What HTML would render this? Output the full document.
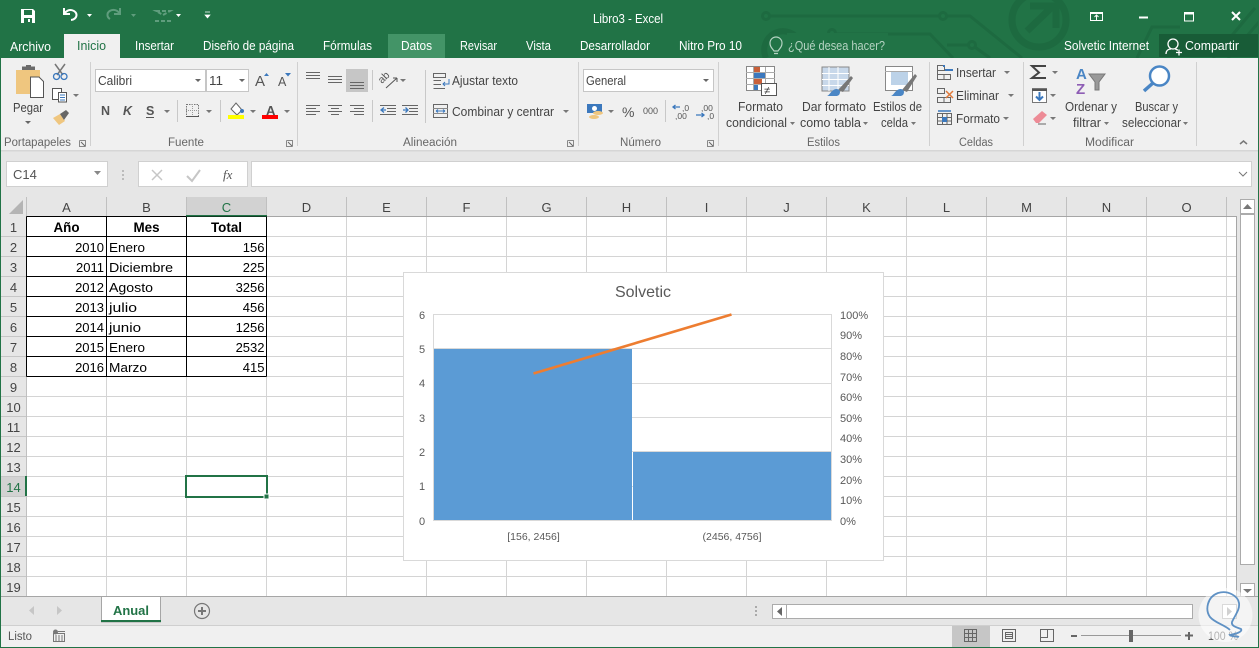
<!DOCTYPE html>
<html><head><meta charset="utf-8"><title>Libro3 - Excel</title>
<style>
html,body{margin:0;padding:0;background:#e6e6e6;width:1259px;height:648px;overflow:hidden}
svg{display:block}
text{font-family:"Liberation Sans",sans-serif;}
.tab{font-size:12.5px;fill:#fff}
.rb{font-size:12.5px;fill:#444}
.gl{font-size:11.5px;fill:#666}
.c{font-size:13px;fill:#000}
.b{font-size:13.4px;fill:#000;font-weight:bold}
.h{font-size:13px;fill:#444}
.ax{font-size:11px;fill:#595959}
</style></head><body>
<svg width="1259" height="648" viewBox="0 0 1259 648" xmlns="http://www.w3.org/2000/svg">
<rect width="1259" height="648" fill="#e6e6e6"/>
<!-- title bar -->
<rect width="1259" height="58" fill="#217346"/>
<g fill="none" stroke="#1d6a40" stroke-width="3">
<path d="M766 16H970L1012 50L1022 58M832 34H930L953 58M947 45H972L990 58"/>
<circle cx="766" cy="16" r="3.5" fill="#217346"/><circle cx="943" cy="16" r="3.5" fill="#217346"/><circle cx="972" cy="45" r="3.5" fill="#217346"/><circle cx="832" cy="33" r="3.5" fill="#217346"/>
<path d="M766 58A18 18 0 0 1 800 42" stroke-width="6"/>
<circle cx="1039" cy="20" r="27" stroke-width="7"/>
<path d="M1027 31L1052 7M1030 6H1056V28" stroke-width="7"/>
<path d="M1137 58L1152 27H1180M1213 58L1255 8M1228 58L1259 22"/>
</g>
<rect x="787" y="33" width="101" height="25" fill="#217346"/>
<rect x="388" y="34" width="57" height="24" fill="#439467"/>
<rect x="64" y="34" width="56" height="24" fill="#f0f0f0"/>
<rect x="1159" y="34" width="100" height="23" fill="#185c37"/>
<text x="593" y="23" class="tab" textLength="70" lengthAdjust="spacingAndGlyphs">Libro3 - Excel</text>
<text x="10" y="51" class="tab" textLength="41" lengthAdjust="spacingAndGlyphs">Archivo</text>
<text x="77" y="50" class="tab" style="fill:#217346" textLength="29" lengthAdjust="spacingAndGlyphs">Inicio</text>
<text x="135" y="50" class="tab" textLength="39" lengthAdjust="spacingAndGlyphs">Insertar</text>
<text x="203" y="50" class="tab" textLength="91" lengthAdjust="spacingAndGlyphs">Diseño de página</text>
<text x="323" y="50" class="tab" textLength="49" lengthAdjust="spacingAndGlyphs">Fórmulas</text>
<text x="401" y="50" class="tab" textLength="31" lengthAdjust="spacingAndGlyphs">Datos</text>
<text x="460" y="50" class="tab" textLength="37" lengthAdjust="spacingAndGlyphs">Revisar</text>
<text x="526" y="50" class="tab" textLength="25" lengthAdjust="spacingAndGlyphs">Vista</text>
<text x="580" y="50" class="tab" textLength="70" lengthAdjust="spacingAndGlyphs">Desarrollador</text>
<text x="679" y="50" class="tab" textLength="63" lengthAdjust="spacingAndGlyphs">Nitro Pro 10</text>
<text x="788" y="50" class="tab" style="fill:#b5d3c2" textLength="97" lengthAdjust="spacingAndGlyphs">¿Qué desea hacer?</text>
<text x="1064" y="50" class="tab" textLength="85" lengthAdjust="spacingAndGlyphs">Solvetic Internet</text>
<text x="1185" y="50" class="tab" textLength="54" lengthAdjust="spacingAndGlyphs">Compartir</text>
<!-- bulb -->
<path d="M774 51C771 47 770 46 770 43A6 6 0 0 1 782 43C782 46 781 47 778 51ZM774 53.500H778" fill="none" stroke="#b5d3c2" stroke-width="1.200"/>
<!-- person -->
<g fill="none" stroke="#fff" stroke-width="1.300"><circle cx="1173" cy="44" r="5"/><path d="M1166 54C1166 50 1169 49 1171 49M1175 49C1176 49 1177 50 1178 50M1176 52.500H1182M1179 49.500V55.500"/></g>
<!-- window buttons -->
<g fill="none" stroke="#fff">
<rect x="1090.500" y="12.500" width="12" height="8"/><path d="M1090 13.500H1103" stroke-width="1"/><path d="M1096.500 20V15.500M1094.500 17L1096.500 15L1098.500 17"/>
<path d="M1139 17.500H1148" stroke-width="2"/>
<rect x="1184.500" y="12.500" width="9" height="8.500"/><path d="M1184 13.500H1194" stroke-width="2"/>
<path d="M1232 12L1240 20M1240 12L1232 20" stroke-width="2"/>
</g>
<!-- QAT -->
<g>
<path d="M21 9H33L35 11V23H21Z" fill="#fff"/><rect x="24" y="10" width="8" height="5" fill="#217346"/><rect x="24" y="18" width="8" height="5" fill="#217346"/><rect x="28" y="19" width="2" height="3" fill="#fff"/>
<path d="M65 14A6 5 0 1 1 71 21M64 9V15H70" fill="none" stroke="#fff" stroke-width="2" transform="translate(0 -1)"/>
<path d="M87 14H92L89.500 17Z" fill="#fff"/>
<path d="M124 14A6 5 0 1 0 115 20M125 9V15H119" fill="none" stroke="#5f9d7d" stroke-width="2" transform="translate(-5 -1)"/>
<path d="M131 14H136L133.500 17Z" fill="#5f9d7d"/>
<path d="M156 11H170L163 15ZM155 21H171" fill="none" stroke="#5f9d7d" stroke-width="2" stroke-dasharray="4 2"/>
<path d="M176 14H181L178.500 17Z" fill="#fff"/>
<path d="M205 12H210M205 15H210L207.500 18Z" fill="#fff" stroke="#fff" stroke-width=".7"/>
</g>
<!-- ribbon -->
<rect x="1" y="58" width="1257" height="92" fill="#f0f0f0"/>
<rect x="1" y="150" width="1257" height="1.500" fill="#d6d6d6"/>
<path d="M90.500 62V146M297.500 62V146M578.500 62V146M718.500 62V146M929.500 62V146M1023.500 62V146M1196.500 62V146" stroke="#d0d0d0" fill="none"/>
<path d="M372.500 70V90M372.500 100V122M425.500 70V123M177.500 100V122M220.500 100V122M665.500 100V122" stroke="#c8c8c8" fill="none"/>
<!-- clipboard -->
<path d="M16 70H40V94H16Z" fill="#efc67f"/><path d="M22 70V66.500H26V65H31V66.500H35V70Z" fill="#6b6b6b"/>
<path d="M30.500 77H39L43.500 81.500V97.500H30.500Z" fill="#fff" stroke="#555"/>
<text x="13" y="112" class="rb" textLength="30" lengthAdjust="spacingAndGlyphs">Pegar</text>
<path d="M25 121H31L28 124Z" fill="#666"/>
<path d="M55 64L63 75M65 64L57 75" stroke="#777" stroke-width="1.500" fill="none"/><g fill="none" stroke="#3b78bd" stroke-width="1.300"><circle cx="56.500" cy="76.500" r="3"/><circle cx="64" cy="76.500" r="3"/></g>
<g fill="#fff" stroke="#555"><rect x="52.500" y="88.500" width="9" height="11"/><rect x="58.500" y="92.500" width="8" height="9.500"/></g><path d="M60 95H65M60 97.500H65M60 100H65" stroke="#3b78bd"/>
<path d="M73 94H79L76 97Z" fill="#777"/>
<path d="M53 118L60 114L65 121L59 125Z" fill="#efc67f"/><path d="M60 114L66 110L69 113L64 120Z" fill="#666"/>
<text x="4" y="146" class="gl" textLength="67" lengthAdjust="spacingAndGlyphs">Portapapeles</text>
<path d="M79.500 140.500H85.500V146.500M79.500 140.500V146.500H85.500" fill="none" stroke="#888"/><path d="M81 142L85 146" stroke="#666"/>
<!-- font -->
<rect x="95.500" y="69.500" width="110" height="22" fill="#fff" stroke="#c6c6c6"/>
<rect x="206.500" y="69.500" width="42" height="22" fill="#fff" stroke="#c6c6c6"/>
<text x="98" y="85" class="rb" textLength="34" lengthAdjust="spacingAndGlyphs">Calibri</text>
<text x="209" y="85" class="rb" textLength="14" lengthAdjust="spacingAndGlyphs">11</text>
<path d="M195 79H201L198 82ZM239 79H245L242 82Z" fill="#666"/>
<text x="255" y="86" style="font-size:15px;fill:#555">A</text><path d="M264 76H269L266.500 73Z" fill="#3b78bd"/>
<text x="278" y="86" style="font-size:12.500px;fill:#555">A</text><path d="M285 73H291L288 76.500Z" fill="#3b78bd"/>
<text x="101" y="115" style="font-size:12.500px;font-weight:bold;fill:#555">N</text>
<text x="123" y="115" style="font-size:12.500px;font-weight:bold;font-style:italic;fill:#555">K</text>
<text x="146" y="115" style="font-size:12.500px;font-weight:bold;fill:#555">S</text><path d="M146 117.500H154" stroke="#555"/>
<path d="M164 110H170L167 113ZM206 110H212L209 113ZM250 110H256L253 113ZM284 110H290L287 113Z" fill="#777"/>
<rect x="186.500" y="104.500" width="12" height="12" fill="none" stroke="#777" stroke-dasharray="1.500 1"/><path d="M192.500 104V117M186 110.500H199" stroke="#999" stroke-dasharray="1 1"/><path d="M186 116.500H199" stroke="#555"/>
<path d="M231 109L236 103L242 110L237 115Z" fill="#fff" stroke="#666"/><circle cx="242" cy="111" r="2" fill="#3b78bd"/>
<rect x="228" y="115" width="16" height="4" fill="#ff0"/>
<text x="266" y="115" style="font-size:13px;font-weight:bold;fill:#555">A</text><rect x="262" y="115" width="16" height="4" fill="#f00"/>
<text x="168" y="146" class="gl" textLength="36" lengthAdjust="spacingAndGlyphs">Fuente</text>
<path d="M286.500 140.500H292.500V146.500M286.500 140.500V146.500H292.500" fill="none" stroke="#888"/><path d="M288 142L292 146" stroke="#666"/>
<!-- align -->
<rect x="346" y="69" width="22" height="23" fill="#c6c6c6"/>
<path d="M306 72.500H320M306 75.500H320M306 78.500H320M328 76.500H342M328 79.500H342M328 82.500H342M350 82.500H364M350 85.500H364M350 88.500H364" stroke="#666" fill="none"/>
<path d="M306 105.500H320M306 108.500H316M306 111.500H320M306 114.500H316M328 105.500H342M331 108.500H339M328 111.500H342M331 114.500H339M350 105.500H364M354 108.500H364M350 111.500H364M354 114.500H364" stroke="#666" fill="none"/>
<text x="382" y="84" transform="rotate(-45 382 84)" style="font-size:10.500px;fill:#555">ab</text><path d="M386 88L397 78M397 78H393M397 78V82" stroke="#555" fill="none"/>
<path d="M400 79H406L403 82Z" fill="#777"/>
<path d="M380 105.500H396M387 108.500H396M387 111.500H396M380 114.500H396M402 105.500H418M409 108.500H418M409 111.500H418M402 114.500H418" stroke="#666" fill="none"/>
<path d="M381 110H386M384 107.500L381 110L384 112.500M403 110H408M405.500 107.500L408 110L405.500 112.500" stroke="#3b78bd" fill="none" stroke-width="1.300"/>
<text x="403" y="146" class="gl" textLength="54" lengthAdjust="spacingAndGlyphs">Alineación</text>
<path d="M567.500 140.500H573.500V146.500M567.500 140.500V146.500H573.500" fill="none" stroke="#888"/><path d="M569 142L573 146" stroke="#666"/>
<path d="M433.500 73.500H445.500V77.500H433.500ZM433.500 80.500H441M433.500 84.500H441M433.500 88.500H445" stroke="#666" fill="none"/><path d="M449 79V84H443M445 82L443 84L445 86" stroke="#3b78bd" fill="none"/>
<text x="452" y="85" class="rb" textLength="66" lengthAdjust="spacingAndGlyphs">Ajustar texto</text>
<rect x="433.500" y="104.500" width="14" height="13" fill="none" stroke="#666"/><path d="M433 108.500H448M433 113.500H448" stroke="#888"/><path d="M436 111H445M436 111L438 109.500M436 111L438 112.500M445 111L443 109.500M445 111L443 112.500" stroke="#3b78bd" fill="none"/>
<text x="452" y="116" class="rb" textLength="102" lengthAdjust="spacingAndGlyphs">Combinar y centrar</text>
<path d="M563 110H569L566 113Z" fill="#777"/>
<!-- number -->
<rect x="583.500" y="69.500" width="130" height="22" fill="#fff" stroke="#c6c6c6"/>
<text x="586" y="85" class="rb" textLength="40" lengthAdjust="spacingAndGlyphs">General</text>
<path d="M703 79H709L706 82Z" fill="#666"/>
<rect x="587" y="104" width="15" height="9" fill="#3b78bd"/><circle cx="594.500" cy="108.500" r="2.500" fill="#fff"/><ellipse cx="598" cy="113" rx="5" ry="2" fill="#efc67f"/><ellipse cx="594" cy="117" rx="5" ry="2" fill="#efc67f"/>
<path d="M608 110H614L611 113Z" fill="#777"/>
<text x="622" y="117" style="font-size:14px;fill:#555">%</text>
<text x="643" y="114" style="font-size:9px;fill:#555">000</text>
<text x="682" y="111" style="font-size:8.500px;fill:#555">,0</text><text x="675" y="119" style="font-size:8.500px;fill:#555">,00</text><path d="M680 107H673M675.500 105L673 107L675.500 109" stroke="#3b78bd" fill="none" stroke-width="1.300"/>
<text x="701" y="111" style="font-size:8.500px;fill:#555">,00</text><text x="707" y="119" style="font-size:8.500px;fill:#555">,0</text><path d="M696 115H704M701.500 113L704 115L701.500 117" stroke="#3b78bd" fill="none" stroke-width="1.300"/>
<text x="620" y="146" class="gl" textLength="41" lengthAdjust="spacingAndGlyphs">Número</text>
<path d="M707.500 140.500H713.500V146.500M707.500 140.500V146.500H713.500" fill="none" stroke="#888"/><path d="M709 142L713 146" stroke="#666"/>
<!-- styles -->
<rect x="746.500" y="66.500" width="28" height="24" fill="#fff" stroke="#888"/>
<rect x="754" y="67" width="6" height="5" fill="#c8603a"/><rect x="754" y="73" width="11" height="5" fill="#3b78bd"/><rect x="754" y="79" width="8" height="5" fill="#c8603a"/><rect x="754" y="85" width="4" height="5" fill="#3b78bd"/>
<path d="M753.500 67V90M765.500 67V90M746 72.500H775M746 78.500H775M746 84.500H775" stroke="#aaa" fill="none"/>
<rect x="761.500" y="83.500" width="15" height="12" fill="#fff" stroke="#555"/><text x="764" y="94" style="font-size:11px;fill:#333">≠</text>
<text x="738" y="111" class="rb" textLength="45" lengthAdjust="spacingAndGlyphs">Formato</text>
<text x="726" y="127" class="rb" textLength="61" lengthAdjust="spacingAndGlyphs">condicional</text><path d="M790 122H795L792.500 125Z" fill="#777"/>
<rect x="822" y="67" width="27" height="24" fill="#c8d8ea" stroke="#888"/><path d="M829 67V91M838 67V91M822 73.500H849M822 79.500H849M822 85.500H849" stroke="#fff" fill="none"/>
<path d="M838 90L851 76L853 78L843 92Z" fill="#777"/><path d="M827 96C830 95 831 90 836 89C840 89 841 92 839 95L837 96Z" fill="#4a86c5"/>
<text x="802" y="111" class="rb" textLength="64" lengthAdjust="spacingAndGlyphs">Dar formato</text>
<text x="800" y="127" class="rb" textLength="61" lengthAdjust="spacingAndGlyphs">como tabla</text><path d="M863 122H868L865.500 125Z" fill="#777"/>
<rect x="885.500" y="66.500" width="27" height="24" fill="#fff" stroke="#888"/><rect x="891" y="72" width="17" height="13" fill="#bcd2e8"/><path d="M885 71.500H913" stroke="#aaa"/>
<path d="M902 90L915 74L917 76L907 92Z" fill="#777"/><path d="M891 96C894 95 895 90 900 89C904 89 905 92 903 95L901 96Z" fill="#4a86c5"/>
<text x="873" y="111" class="rb" textLength="49" lengthAdjust="spacingAndGlyphs">Estilos de</text>
<text x="881" y="127" class="rb" textLength="27" lengthAdjust="spacingAndGlyphs">celda</text><path d="M911 122H916L913.500 125Z" fill="#777"/>
<text x="807" y="146" class="gl" textLength="33" lengthAdjust="spacingAndGlyphs">Estilos</text>
<!-- cells -->
<g fill="none" stroke="#666"><path d="M937.500 65.500H944.500V70.500H937.500ZM937.500 74.500H950.500V79.500H937.500ZM937.500 79.500V80M944 74.500V79.500M937.500 70.500V74"/><path d="M937.500 88.500H944.500V93.500H937.500ZM937.500 97.500H950.500V102.500H937.500ZM944 97.500V102.500"/><rect x="937.500" y="113.500" width="14" height="11"/><path d="M937 117.500H952M937 121H952M942.500 113V125M947 113V125"/></g>
<path d="M945 70H953M945 66H943" stroke="#3b78bd" stroke-width="2" fill="none"/><path d="M946 91L953 98M953 91L946 98" stroke="#e07a3a" stroke-width="1.500" fill="none"/>
<path d="M938 111H951" stroke="#3b78bd" stroke-width="1.500"/><rect x="942" y="117" width="5" height="5" fill="#3b78bd"/>
<text x="956" y="77" class="rb" textLength="40" lengthAdjust="spacingAndGlyphs">Insertar</text><path d="M1004 71H1010L1007 74Z" fill="#777"/>
<text x="956" y="100" class="rb" textLength="43" lengthAdjust="spacingAndGlyphs">Eliminar</text><path d="M1008 94H1014L1011 97Z" fill="#777"/>
<text x="956" y="123" class="rb" textLength="44" lengthAdjust="spacingAndGlyphs">Formato</text><path d="M1003 117H1009L1006 120Z" fill="#777"/>
<text x="959" y="146" class="gl" textLength="34" lengthAdjust="spacingAndGlyphs">Celdas</text>
<!-- edit -->
<path d="M1046 66H1032L1039 72.500L1032 78H1046" fill="none" stroke="#444" stroke-width="2"/><path d="M1052 71H1058L1055 74ZM1050 94H1056L1053 97ZM1050 117H1056L1053 120Z" fill="#777"/>
<rect x="1032.500" y="88.500" width="14" height="14" fill="#fff" stroke="#777"/><path d="M1032 90H1047" stroke="#555" stroke-width="2"/><path d="M1039.500 92V100M1036 96.500L1039.500 100L1043 96.500" stroke="#3b78bd" stroke-width="2" fill="none"/>
<path d="M1033 119L1042 111L1047 115L1039 123H1036Z" fill="#ed8b96"/><path d="M1038 124H1046" stroke="#666"/>
<text x="1076" y="79" style="font-size:15px;font-weight:bold;fill:#4a86c5">A</text><text x="1076" y="94" style="font-size:15px;font-weight:bold;fill:#8e5db5">Z</text>
<path d="M1089 74H1105L1099 82V90H1095V82Z" fill="#999" stroke="#777"/>
<circle cx="1159.500" cy="76" r="9.500" fill="#fff" stroke="#4a86c5" stroke-width="2.500"/><path d="M1153 83L1144 91" stroke="#4a86c5" stroke-width="3.500"/>
<text x="1065" y="111" class="rb" textLength="52" lengthAdjust="spacingAndGlyphs">Ordenar y</text>
<text x="1073" y="127" class="rb" textLength="28" lengthAdjust="spacingAndGlyphs">filtrar</text><path d="M1104 122H1109L1106.500 125Z" fill="#777"/>
<text x="1135" y="111" class="rb" textLength="43" lengthAdjust="spacingAndGlyphs">Buscar y</text>
<text x="1122" y="127" class="rb" textLength="59" lengthAdjust="spacingAndGlyphs">seleccionar</text><path d="M1183 122H1188L1185.500 125Z" fill="#777"/>
<text x="1085" y="146" class="gl" textLength="49" lengthAdjust="spacingAndGlyphs">Modificar</text>
<path d="M1240 144L1243.500 141L1247 144" fill="none" stroke="#777" stroke-width="1.500"/>
<!-- formula bar -->
<rect x="6.500" y="161.500" width="101" height="25" fill="#fff" stroke="#d0d0d0"/>
<text x="13" y="179" style="font-size:13px;fill:#555">C14</text><path d="M94 171H101L97.500 175Z" fill="#888"/>
<path d="M123 170V172M123 174V176M123 178V180" stroke="#bbb" stroke-width="2"/>
<rect x="138.500" y="161.500" width="109" height="25" fill="#fff" stroke="#d0d0d0"/>
<path d="M152 170L162 180M162 170L152 180" stroke="#c6c6c6" stroke-width="1.500"/><path d="M187 176L192 181L200 170" stroke="#c6c6c6" stroke-width="2" fill="none"/>
<text x="223" y="179" style="font-family:'Liberation Serif',serif;font-size:13px;font-style:italic;fill:#555">fx</text>
<rect x="251.500" y="161.500" width="1000" height="25" fill="#fff" stroke="#d0d0d0"/><path d="M1239 172L1243 176L1247 172" fill="none" stroke="#777"/>
<!-- grid -->
<rect x="1" y="197" width="1236" height="400" fill="#fff"/>
<path d="M106.500 217V597M186.500 217V597M266.500 217V597M346.500 217V597M426.500 217V597M506.500 217V597M586.500 217V597M666.500 217V597M746.500 217V597M826.500 217V597M906.500 217V597M986.500 217V597M1066.500 217V597M1146.500 217V597M1226.500 197V597" stroke="#d4d4d4" fill="none"/>
<path d="M27 236.500H1237M27 256.500H1237M27 276.500H1237M27 296.500H1237M27 316.500H1237M27 336.500H1237M27 356.500H1237M27 376.500H1237M27 396.500H1237M27 416.500H1237M27 436.500H1237M27 456.500H1237M27 476.500H1237M27 496.500H1237M27 516.500H1237M27 536.500H1237M27 556.500H1237M27 576.500H1237" stroke="#d4d4d4" fill="none"/>
<!-- headers -->
<rect x="1" y="197" width="1236" height="20" fill="#e6e6e6"/>
<rect x="1" y="217" width="25" height="380" fill="#e6e6e6"/>
<rect x="186" y="197" width="81" height="19" fill="#d2d2d2"/>
<rect x="1" y="476" width="25" height="20" fill="#d2d2d2"/>
<path d="M23 200V214H9Z" fill="#b4b4b4"/>
<path d="M26.500 197V597M106.500 197V216M186.500 197V216M266.500 197V216M346.500 197V216M426.500 197V216M506.500 197V216M586.500 197V216M666.500 197V216M746.500 197V216M826.500 197V216M906.500 197V216M986.500 197V216M1066.500 197V216M1146.500 197V216M1226.500 197V216" stroke="#c0c0c0" fill="none"/>
<path d="M1 236.500H26M1 256.500H26M1 276.500H26M1 296.500H26M1 316.500H26M1 336.500H26M1 356.500H26M1 376.500H26M1 396.500H26M1 416.500H26M1 436.500H26M1 456.500H26M1 476.500H26M1 496.500H26M1 516.500H26M1 536.500H26M1 556.500H26M1 576.500H26" stroke="#c6c6c6" fill="none"/>
<path d="M27 216.500H1237M1236.500 216V597" stroke="#a6a6a6" fill="none"/>
<rect x="186" y="215" width="81" height="2" fill="#217346"/>
<rect x="25" y="476" width="2" height="20" fill="#217346"/>
<g class="h" text-anchor="middle">
<text x="66.500" y="212" class="h">A</text><text x="146.500" y="212" class="h">B</text><text x="226.500" y="212" class="h" style="fill:#217346">C</text><text x="306.500" y="212" class="h">D</text><text x="386.500" y="212" class="h">E</text><text x="466.500" y="212" class="h">F</text><text x="546.500" y="212" class="h">G</text><text x="626.500" y="212" class="h">H</text><text x="706.500" y="212" class="h">I</text><text x="786.500" y="212" class="h">J</text><text x="866.500" y="212" class="h">K</text><text x="946.500" y="212" class="h">L</text><text x="1026.500" y="212" class="h">M</text><text x="1106.500" y="212" class="h">N</text><text x="1186.500" y="212" class="h">O</text>
<text x="13.500" y="232" class="h">1</text><text x="13.500" y="252" class="h">2</text><text x="13.500" y="272" class="h">3</text><text x="13.500" y="292" class="h">4</text><text x="13.500" y="312" class="h">5</text><text x="13.500" y="332" class="h">6</text><text x="13.500" y="352" class="h">7</text><text x="13.500" y="372" class="h">8</text><text x="13.500" y="392" class="h">9</text><text x="13.500" y="412" class="h">10</text><text x="13.500" y="432" class="h">11</text><text x="13.500" y="452" class="h">12</text><text x="13.500" y="472" class="h">13</text><text x="13.500" y="492" class="h" style="fill:#217346">14</text><text x="13.500" y="512" class="h">15</text><text x="13.500" y="532" class="h">16</text><text x="13.500" y="552" class="h">17</text><text x="13.500" y="572" class="h">18</text><text x="13.500" y="592" class="h">19</text>
</g>
<!-- table -->
<path d="M26.500 216.500H266.500M26.500 236.500H266.500M26.500 256.500H266.500M26.500 276.500H266.500M26.500 296.500H266.500M26.500 316.500H266.500M26.500 336.500H266.500M26.500 356.500H266.500M26.500 376.500H266.500M26.500 216.500V376.500M106.500 216.500V376.500M186.500 216.500V376.500M266.500 216.500V376.500" stroke="#000" fill="none"/>
<rect x="186" y="215" width="81" height="1.500" fill="#217346"/>
<text x="66.500" y="232" class="b" text-anchor="middle">Año</text><text x="146.500" y="232" class="b" text-anchor="middle">Mes</text><text x="226.500" y="232" class="b" text-anchor="middle">Total</text>
<g text-anchor="end"><text x="104" y="252" class="c">2010</text><text x="104" y="272" class="c">2011</text><text x="104" y="292" class="c">2012</text><text x="104" y="312" class="c">2013</text><text x="104" y="332" class="c">2014</text><text x="104" y="352" class="c">2015</text><text x="104" y="372" class="c">2016</text>
<text x="264.500" y="252" class="c">156</text><text x="264.500" y="272" class="c">225</text><text x="264.500" y="292" class="c">3256</text><text x="264.500" y="312" class="c">456</text><text x="264.500" y="332" class="c">1256</text><text x="264.500" y="352" class="c">2532</text><text x="264.500" y="372" class="c">415</text></g>
<text x="109" y="252" class="c" textLength="36" lengthAdjust="spacingAndGlyphs">Enero</text><text x="109" y="272" class="c" textLength="64" lengthAdjust="spacingAndGlyphs">Diciembre</text><text x="109" y="292" class="c" textLength="44" lengthAdjust="spacingAndGlyphs">Agosto</text><text x="109" y="312" class="c" textLength="28" lengthAdjust="spacingAndGlyphs">julio</text><text x="109" y="332" class="c" textLength="32" lengthAdjust="spacingAndGlyphs">junio</text><text x="109" y="352" class="c" textLength="36" lengthAdjust="spacingAndGlyphs">Enero</text><text x="109" y="372" class="c" textLength="38" lengthAdjust="spacingAndGlyphs">Marzo</text>
<!-- selection -->
<rect x="186" y="476" width="81" height="21" fill="none" stroke="#217346" stroke-width="2"/>
<rect x="264" y="494" width="5" height="5" fill="#217346" stroke="#fff"/>
<!-- chart -->
<rect x="403.500" y="272.500" width="480" height="288" fill="#fff" stroke="#d9d9d9"/>
<text x="643" y="297" text-anchor="middle" style="font-size:16px;fill:#595959">Solvetic</text>
<path d="M433.500 314.500H831.500M433.500 348.500H831.500M433.500 383.500H831.500M433.500 417.500H831.500M433.500 451.500H831.500M433.500 486.500H831.500M433.500 520.500H831.500M433.500 314V521M831.500 314V521" stroke="#d9d9d9" fill="none"/>
<rect x="434" y="349" width="198" height="171" fill="#5b9bd5"/>
<rect x="633" y="452" width="198" height="68" fill="#5b9bd5"/>
<path d="M533.500 373.500L731.500 314.500" stroke="#ed7d31" stroke-width="2.600" fill="none"/>
<g text-anchor="middle"><text x="422" y="319" class="ax">6</text><text x="422" y="353" class="ax">5</text><text x="422" y="387" class="ax">4</text><text x="422" y="422" class="ax">3</text><text x="422" y="456" class="ax">2</text><text x="422" y="490" class="ax">1</text><text x="422" y="525" class="ax">0</text>
<text x="533.500" y="540" class="ax" style="font-size:10.500px">[156, 2456]</text><text x="732" y="540" class="ax" style="font-size:10.500px">(2456, 4756]</text></g>
<text x="840" y="319" class="ax">100%</text><text x="840" y="339" class="ax">90%</text><text x="840" y="360" class="ax">80%</text><text x="840" y="381" class="ax">70%</text><text x="840" y="401" class="ax">60%</text><text x="840" y="422" class="ax">50%</text><text x="840" y="442" class="ax">40%</text><text x="840" y="463" class="ax">30%</text><text x="840" y="484" class="ax">20%</text><text x="840" y="504" class="ax">10%</text><text x="840" y="525" class="ax">0%</text>
<!-- vertical scrollbar -->
<rect x="1237" y="197" width="21" height="400" fill="#e6e6e6"/>
<rect x="1240.500" y="199.500" width="14" height="14" fill="#fff" stroke="#ababab"/><path d="M1243 209H1252L1247.500 204Z" fill="#777"/>
<rect x="1240.500" y="214.500" width="14" height="350" fill="#fff" stroke="#ababab"/>
<rect x="1240.500" y="583.500" width="14" height="13" fill="#fff" stroke="#ababab"/><path d="M1243 589H1252L1247.500 593Z" fill="#777"/>
<!-- sheet bar -->
<rect x="1" y="597" width="1257" height="29" fill="#e6e6e6"/>
<path d="M1 596.500H1258" stroke="#a6a6a6"/>
<path d="M34 606V615L29 610.500ZM57 606V615L62 610.500Z" fill="#c6c6c6"/>
<path d="M101.500 597V622H160.500V597" fill="#fff" stroke="#a6a6a6"/>
<rect x="101" y="620" width="60" height="2" fill="#217346"/>
<text x="113" y="615" style="font-size:13px;font-weight:bold;fill:#217346" textLength="36" lengthAdjust="spacingAndGlyphs">Anual</text>
<circle cx="202" cy="611" r="7.500" fill="none" stroke="#777" stroke-width="1.200"/><path d="M198 611H206M202 607V615" stroke="#777" stroke-width="2"/>
<path d="M756 606V608M756 610V612M756 614V616" stroke="#aaa" stroke-width="2"/>
<rect x="772.500" y="604.500" width="420" height="14" fill="#fff" stroke="#ababab"/><rect x="772.500" y="604.500" width="14" height="14" fill="#fff" stroke="#ababab"/><path d="M782 607V616L777 611.500Z" fill="#666"/>
<rect x="1222.500" y="604.500" width="14" height="14" fill="#fff" stroke="#ababab"/><path d="M1227 607V616L1232 611.500Z" fill="#999"/>
<!-- status bar -->
<rect x="1" y="626" width="1257" height="21" fill="#f0f0f0"/>
<path d="M1 625.500H1258" stroke="#cfcfcf"/>
<text x="8" y="640" style="font-size:11.500px;fill:#555" textLength="24" lengthAdjust="spacingAndGlyphs">Listo</text>
<circle cx="55.500" cy="632" r="2.500" fill="#777"/><rect x="53.500" y="633.500" width="11" height="8" fill="none" stroke="#777"/><path d="M55 636H63M55 638H63M55 640H63" stroke="#777" stroke-dasharray="2 1"/><path d="M58 631.500H65" stroke="#777"/>
<rect x="952" y="626" width="38" height="21" fill="#c6c6c6"/>
<g fill="none" stroke="#666"><path d="M964.500 629.500H976.500V641.500H964.500ZM968.500 629.500V641.500M972.500 629.500V641.500M964.500 633.500H976.500M964.500 637.500H976.500"/>
<rect x="1002.500" y="629.500" width="13" height="12"/><rect x="1005.500" y="632.500" width="7" height="6"/><path d="M1006 634.500H1012M1006 636.500H1012"/>
<path d="M1040.500 629.500H1053.500V641.500H1040.500ZM1040.500 637.500H1047.500V629.500"/></g>
<rect x="1071" y="635" width="6" height="2" fill="#666"/><path d="M1081 635.500H1181" stroke="#999"/><rect x="1129" y="630" width="4" height="12" fill="#666"/><path d="M1185 635.500H1193M1189 632V640" stroke="#666" stroke-width="2"/>
<text x="1208" y="640" style="font-size:11.500px;fill:#555" textLength="30" lengthAdjust="spacingAndGlyphs">100 %</text>
<!-- frame -->
<path d="M0.500 0V648M1258.500 0V648M0 647.500H1259" stroke="#217346" fill="none"/>
<!-- watermark -->
<circle cx="1225.500" cy="615" r="27" fill="#fff" fill-opacity=".55"/>
<path d="M1230 630C1225 625 1215 623 1210 617C1205 610 1207 597 1218 593C1228 590 1238 596 1239 603C1240 610 1235 615 1232 622C1231 626 1236 627 1241 629C1243 632 1235 634 1230 635C1232 637 1237 636 1239 637" fill="none" stroke="#4f86bf" stroke-width="1.800" stroke-opacity=".9"/>
</svg>
</body></html>
